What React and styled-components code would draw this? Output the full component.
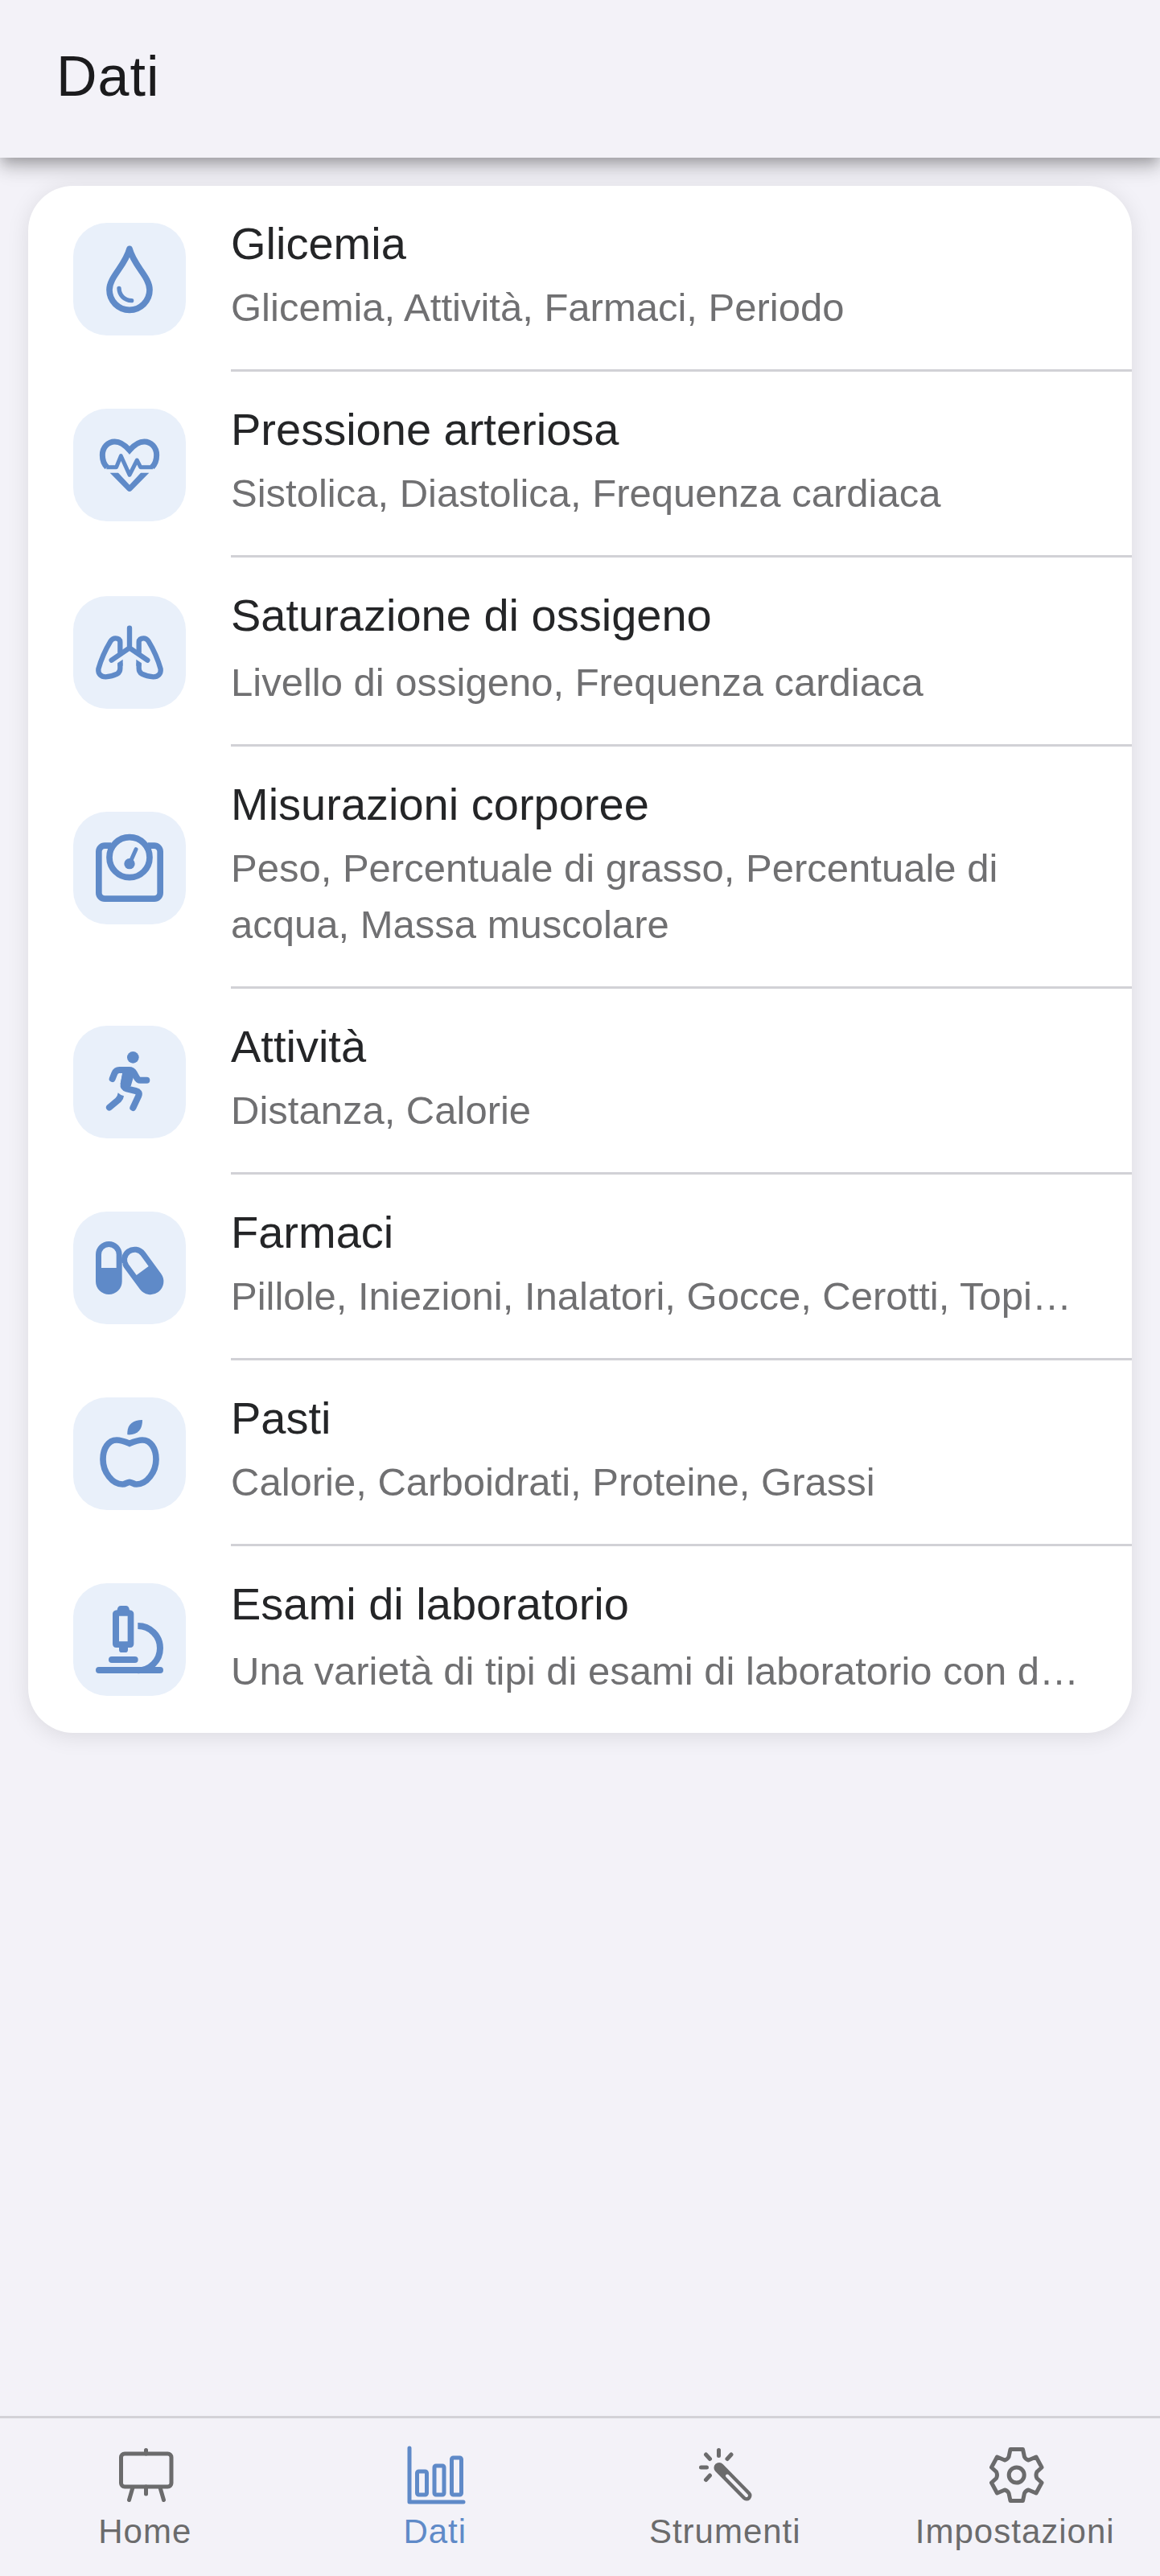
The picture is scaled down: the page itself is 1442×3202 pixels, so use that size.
import React from "react";
import styled, { createGlobalStyle } from "styled-components";

const GlobalStyle = createGlobalStyle`
  * {
    box-sizing: border-box;
  }

  body {
    margin: 0;
    background-color: #f3f2f8;
    font-family: "Liberation Sans", Arial, sans-serif;
  }
`;

const Page = styled.div`
  display: flex;
  flex-direction: column;
  min-height: 100vh;
`;

const Header = styled.header`
  padding: 53px 70px 59px;
  background-color: #f3f2f8;
  box-shadow:
    0 7px 14px -4px rgba(0, 0, 0, 0.2),
    0 14px 18px 0 rgba(0, 0, 0, 0.14),
    0 4px 35px 0 rgba(0, 0, 0, 0.12);
`;

const PageTitle = styled.h1`
  margin: 0;
  font-size: 70px;
  font-weight: 400;
  line-height: 84px;
  letter-spacing: 1px;
  color: #1b1b1d;
`;

const Main = styled.main`
  flex: 1;
  padding: 35px;
`;

const Card = styled.ul`
  margin: 0;
  padding: 0;
  list-style: none;
  background-color: #fff;
  border-radius: 56px;
  box-shadow: 0 4px 28px rgba(0, 0, 0, 0.1);
`;

const Row = styled.a`
  display: flex;
  align-items: center;
  gap: 56px;
  padding-left: 56px;
  color: inherit;
  text-decoration: none;
`;

const IconTile = styled.span`
  display: flex;
  flex: none;
  align-items: center;
  justify-content: center;
  width: 140px;
  height: 140px;
  border-radius: 42px;
  background-color: #e9f0fa;
  color: #5f8ac8;

  svg {
    display: block;
    width: 84px;
    height: 84px;
    overflow: visible;
  }
`;

const RowText = styled.span`
  display: flex;
  flex: 1;
  flex-direction: column;
  gap: ${(props) => (props.$loose ? "6px" : "2px")};
  min-width: 0;
  padding: 30px 56px 42px 0;
  border-bottom: 3px solid #d1d1d6;

  li:last-child & {
    border-bottom: none;
  }
`;

const RowTitle = styled.span`
  font-size: 56px;
  line-height: 84px;
  color: #242527;
`;

const RowSubtitle = styled.span`
  font-size: 49px;
  line-height: 70px;
  color: #707072;
  overflow: hidden;
  text-overflow: ellipsis;
  white-space: ${(props) => (props.$wrap ? "normal" : "nowrap")};
`;

const TabBar = styled.nav`
  display: grid;
  grid-template-columns: repeat(4, 1fr);
  border-top: 3px solid #d3d2d7;
  background-color: #f3f2f8;
`;

const Tab = styled.a`
  display: flex;
  flex-direction: column;
  align-items: center;
  padding: 28px 0 26px;
  font-size: 42px;
  line-height: 58px;
  letter-spacing: 1px;
  color: ${(props) => (props.$active ? "#5f8ac8" : "#6b6b6c")};
  text-decoration: none;

  svg {
    display: block;
    width: 84px;
    height: 84px;
  }
`;

const Drop = () => (
  <svg viewBox="0 0 252 252" fill="none" stroke="currentColor" strokeLinecap="round" strokeLinejoin="round">
    <path
      strokeWidth="23"
      d="M126 13C109 78 51 117 51 166a75 75 0 0 0 150 0C201 117 143 78 126 13Z"
    />
    <path strokeWidth="16" d="M87 160C88 186 106 205 134 206" />
  </svg>
);

const HeartPulse = () => (
  <svg viewBox="0 0 252 252" fill="none" stroke="currentColor">
    <path
      strokeWidth="21"
      d="M42 134C29 121 25 105 25 89C25 60 46 39 71 39C95 39 112 55 126 71C140 55 157 39 181 39C206 39 227 60 227 89C227 105 223 121 210 134"
    />
    <path strokeWidth="15" strokeLinejoin="round" d="M40 134H77L94 92L126 163L154 108L167 134H213" />
    <path
      fill="currentColor"
      stroke="none"
      d="M53 155H84L126 200L168 155H199L134 221Q126 229 118 221Z"
    />
  </svg>
);

const Lung = () => (
  <>
    <path d="M91 128V87C91 78 84 73 74 73C66 73 60 77 56 83C36 116 20 152 10 188C8 206 20 217 37 217C52 216 68 212 80 206C88 201 91 194 91 185V166" />
    <path fill="currentColor" stroke="none" d="M82 165L101 152V176H82Z" />
  </>
);

const Lungs = () => (
  <svg viewBox="0 0 252 252" fill="none" stroke="currentColor" strokeWidth="19">
    <Lung />
    <g transform="translate(252 0) scale(-1 1)">
      <Lung />
    </g>
    <path strokeLinecap="round" strokeLinejoin="round" d="M126 35V109M59 155L126 109L193 155" />
  </svg>
);

const BodyScale = () => (
  <svg viewBox="0 0 252 252" fill="none" stroke="currentColor" strokeWidth="23">
    <path d="M58 42.500H34a22 22 0 0 0-22.500 22V218a22 22 0 0 0 22.500 22.500H218a22 22 0 0 0 22.500-22.500V64.500a22 22 0 0 0-22.500-22H194" />
    <circle cx="126" cy="86" r="75" />
    <circle cx="126" cy="110" r="20" fill="currentColor" stroke="none" />
    <path strokeWidth="15" strokeLinecap="round" d="M126 110L150 56" />
  </svg>
);

const Runner = () => (
  <svg viewBox="0 0 252 252" fill="none" stroke="currentColor" strokeWidth="24" strokeLinecap="round">
    <circle cx="139" cy="34" r="22" fill="currentColor" stroke="none" />
    <path d="M62 114L70 94Q75 81 88 81H124Q137 81 143 92L152 108Q157 119 166 119H190" />
    <path d="M112 90L104 134Q102 147 116 151L149 159Q166 163 160 177L139 222" />
    <path
      fill="currentColor"
      stroke="none"
      d="M101 90H150L140 110L131 141L110 152L92 132Z"
    />
    <path
      fill="currentColor"
      stroke="none"
      d="M83 166Q92 175 105 178Q104 191 94 200L57 231Q47 236 41 228Q35 219 42 212L74 185Q82 178 83 166Z"
    />
  </svg>
);

const PILL = "M-49 0a49 49 0 0 1 98 0V100a49 49 0 0 1-98 0ZM-28 0V50H28V0a28 28 0 0 0-56 0Z";

const Pills = () => (
  <svg viewBox="0 0 252 252" fill="currentColor" fillRule="evenodd">
    <path d={PILL} transform="translate(145 96) rotate(-36.300)" />
    <path stroke="#e9f0fa" strokeWidth="3" d="M99 108V168" />
    <path d={PILL} transform="translate(49 76)" />
  </svg>
);

const Apple = () => (
  <svg viewBox="0 0 252 252" fill="none">
    <path
      stroke="currentColor"
      strokeWidth="23"
      d="M126 88C112 82 95 75 78 75C48 75 27 105 27 147C27 195 62 240 100 240C112 240 117 232 126 232C135 232 140 240 152 240C190 240 225 195 225 147C225 105 204 75 174 75C157 75 140 82 126 88Z"
    />
    <path fill="currentColor" d="M118 55C116 20 135 0 174 0C174 38 155 57 118 55Z" />
  </svg>
);

const Microscope = () => (
  <svg viewBox="0 0 252 252" fill="none" stroke="currentColor" strokeWidth="24">
    <path
      fill="currentColor"
      fillRule="evenodd"
      stroke="none"
      d="M80 16Q82 0 94 0H112Q124 0 126 16Q142 18 142 30V142Q142 156 128 156H120V164Q120 174 110 174H97Q87 174 87 164V156H77Q63 156 63 142V30Q63 18 80 16ZM87 38V133H119V38Z"
    />
    <path d="M157 75A83 83 0 0 1 157 241" />
    <path strokeLinecap="round" d="M12 240H240M60 201H146" />
  </svg>
);

const Board = () => (
  <svg viewBox="0 0 84 84" fill="none" stroke="currentColor" strokeWidth="5" strokeLinecap="round">
    <rect x="12.500" y="16" width="62.500" height="41" rx="4.500" />
    <path d="M43.500 11.500V16M43.500 57V66M27 58L22.500 73.500M61 58L65.500 73.500" />
  </svg>
);

const BarChart = () => (
  <svg viewBox="0 0 84 84" fill="none" stroke="currentColor" strokeWidth="5" strokeLinecap="round" strokeLinejoin="round">
    <path d="M10 9V76H77" />
    <rect x="19.500" y="38" width="12" height="29" rx="2" />
    <rect x="41" y="31" width="12" height="36" rx="2" />
    <rect x="62.500" y="21" width="12" height="46" rx="2" />
  </svg>
);

const Wand = () => (
  <svg viewBox="0 0 84 84" fill="none" stroke="currentColor" strokeWidth="5" strokeLinecap="round">
    <path d="M34.500 11.500V18.500M12.500 33H19.500M18.500 17L23.500 22.500M50 17L45 22.500M18.500 48.500L23.500 43" />
    <path strokeWidth="13" d="M35 33.500L69 68" />
    <path stroke="#f3f2f8" strokeWidth="4" d="M45 43.500L69 68" />
  </svg>
);

const Gear = () => (
  <svg viewBox="0 0 84 84" fill="none" stroke="currentColor" strokeWidth="5" strokeLinejoin="round">
    <path d="M36 10.500H51.500L53.500 20Q55 23 58.500 24L68 20L75 33L69 38.500Q67 42.500 69 46.500L75 52L68 65L58.500 61Q55 62 53.500 65L51.500 74.500H36L34 65Q32.500 62 29 61L19.500 65L12.500 52L18.500 46.500Q20.500 42.500 18.500 38.500L12.500 33L19.500 20L29 24Q32.500 23 34 20Z" />
    <circle cx="43.700" cy="42.500" r="9.500" />
  </svg>
);

const categories = [
  { title: "Glicemia", subtitle: "Glicemia, Attività, Farmaci, Periodo", icon: Drop },
  { title: "Pressione arteriosa", subtitle: "Sistolica, Diastolica, Frequenza cardiaca", icon: HeartPulse },
  { title: "Saturazione di ossigeno", subtitle: "Livello di ossigeno, Frequenza cardiaca", icon: Lungs, loose: true },
  {
    title: "Misurazioni corporee",
    subtitle: "Peso, Percentuale di grasso, Percentuale di acqua, Massa muscolare",
    icon: BodyScale,
    wrap: true,
  },
  { title: "Attività", subtitle: "Distanza, Calorie", icon: Runner },
  { title: "Farmaci", subtitle: "Pillole, Iniezioni, Inalatori, Gocce, Cerotti, Topi…", icon: Pills },
  { title: "Pasti", subtitle: "Calorie, Carboidrati, Proteine, Grassi", icon: Apple },
  {
    title: "Esami di laboratorio",
    subtitle: "Una varietà di tipi di esami di laboratorio con d…",
    icon: Microscope,
    loose: true,
  },
];

const tabs = [
  { label: "Home", icon: Board },
  { label: "Dati", icon: BarChart, active: true },
  { label: "Strumenti", icon: Wand },
  { label: "Impostazioni", icon: Gear },
];

const App = () => {
  return (
    <Page>
      <GlobalStyle />
      <Header>
        <PageTitle>Dati</PageTitle>
      </Header>
      <Main>
        <Card>
          {categories.map(({ title, subtitle, icon: Icon, loose, wrap }) => (
            <li key={title}>
              <Row href="#">
                <IconTile>
                  <Icon />
                </IconTile>
                <RowText $loose={loose}>
                  <RowTitle>{title}</RowTitle>
                  <RowSubtitle $wrap={wrap}>{subtitle}</RowSubtitle>
                </RowText>
              </Row>
            </li>
          ))}
        </Card>
      </Main>
      <TabBar>
        {tabs.map(({ label, icon: Icon, active }) => (
          <Tab key={label} href="#" $active={active}>
            <Icon />
            {label}
          </Tab>
        ))}
      </TabBar>
    </Page>
  );
};

export default App;
